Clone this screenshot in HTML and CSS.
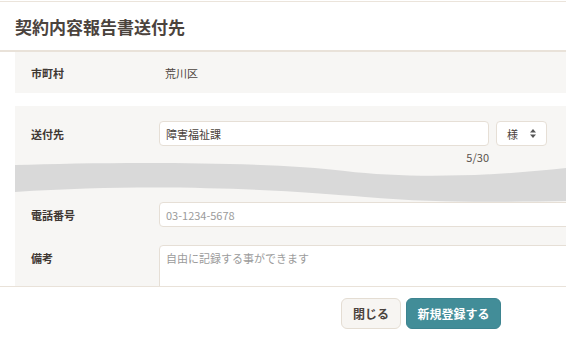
FILE: index.html
```html
<!DOCTYPE html>
<html lang="ja">
<head>
  <meta charset="UTF-8">
  <meta name="viewport" content="width=device-width, initial-scale=1.0">
  <title>契約内容報告書送付先</title>
  <link rel="stylesheet" href="styles.css">
</head>
<body>
  <div class="modal">
    <div class="modal-header">
      <h1>契約内容報告書送付先</h1>
    </div>

    <div class="modal-body">
      <div class="panel panel-city">
        <div class="row">
          <div class="label">市町村</div>
          <div class="value">荒川区</div>
        </div>
      </div>

      <div class="panel panel-form">
        <div class="row row-input">
          <div class="label">送付先</div>
          <div class="field">
            <input class="text-input dest" type="text" value="障害福祉課">
            <div class="select">
              <span>様</span>
              <svg class="select-arrow" viewBox="0 0 6 9" fill="currentColor">
                <path d="M3 0 L6 3.4 L0 3.4 Z"/>
                <path d="M3 9 L6 5.6 L0 5.6 Z"/>
              </svg>
            </div>
          </div>
        </div>
        <div class="counter">5/30</div>

        <!-- 省略部分 -->
        <svg class="wave" viewBox="0 0 551 40" preserveAspectRatio="none">
          <path d="M0 3 C90 0 250 -1 330 9 C395 17 480 14 551 6 L551 39 C480 40 420 41 350 35 C280 29 150 20 0 30 Z" fill="#d9d9d9"/>
        </svg>

        <div class="row row-input">
          <div class="label">電話番号</div>
          <input class="text-input wide" type="text" placeholder="03-1234-5678">
        </div>
        <div class="row row-note">
          <div class="label">備考</div>
          <textarea class="text-input wide note" placeholder="自由に記録する事ができます"></textarea>
        </div>
      </div>
    </div>

    <div class="modal-footer">
      <button class="btn btn-close">閉じる</button>
      <button class="btn btn-primary">新規登録する</button>
    </div>
  </div>
</body>
</html>
```

FILE: styles.css
```css
body {
  margin: 0;
  font-family: "Noto Sans CJK JP", "Noto Sans", sans-serif;
  color: #4a423c;
  background-color: #fff;
  overflow: hidden;
}
.modal {
  margin-top: 1px;
  border-top: 1px solid #ebe4db;
  height: 340px;
  display: flex;
  flex-direction: column;
}
.modal-header {
  height: 48px;
  display: flex;
  align-items: center;
  padding-left: 15px;
  border-bottom: 2px solid #e9e2d9;
  flex-shrink: 0;
}
h1 {
  margin: 0;
  font-size: 17px;
  font-weight: 700;
  color: #4b433d;
}
.modal-body {
  height: 234px;
  padding-left: 15px;
  overflow: hidden;
  flex-shrink: 0;
}
.panel {
  background-color: #f7f6f4;
}
.panel-city {
  height: 41px;
  display: flex;
  align-items: center;
  margin-bottom: 13px;
}
.row {
  display: flex;
  align-items: center;
  padding-left: 16px;
}
.label {
  width: 128px;
  flex-shrink: 0;
  font-size: 11px;
  font-weight: 700;
  color: #3f3833;
}
.value {
  padding-left: 6px;
  font-size: 11px;
  color: #4d4540;
}
.panel-form {
  padding-top: 15px;
}
.field {
  display: flex;
  gap: 7px;
}
.text-input {
  box-sizing: border-box;
  height: 25px;
  padding: 0 6px;
  border: 1px solid #e6dfd6;
  border-radius: 4px;
  background-color: #fff;
  font-family: inherit;
  font-size: 11px;
  color: #4a423c;
  outline: none;
}
.text-input::placeholder {
  color: #9b9b9b;
}
.dest {
  width: 330px;
}
.wide {
  width: 480px;
  flex-shrink: 0;
}
.select {
  box-sizing: border-box;
  width: 51px;
  height: 25px;
  display: flex;
  align-items: center;
  justify-content: space-between;
  padding: 0 10px;
  border: 1px solid #e6dfd6;
  border-radius: 4px;
  background-color: #fff;
  font-size: 11px;
  color: #4a423c;
}
.select-arrow {
  width: 6px;
  height: 9px;
  color: #555;
}
.counter {
  width: 474px;
  text-align: right;
  font-size: 11px;
  line-height: 14px;
  color: #5a524c;
  margin-top: 4px;
}
.wave {
  display: block;
  width: 100%;
  height: 40px;
  margin-top: -2px;
}
.row-note {
  align-items: flex-start;
  margin-top: 18px;
}
.row-note .label {
  padding-top: 5px;
}
.note {
  height: 60px;
  padding-top: 4px;
  resize: none;
}
.modal-footer {
  flex: 1;
  border-top: 1px solid #e9e2d9;
  display: flex;
  justify-content: flex-end;
  align-items: flex-start;
  gap: 5px;
  padding: 11px 65px 0 0;
}
.btn {
  height: 31px;
  padding: 0;
  border-radius: 6px;
  font-family: inherit;
  font-size: 12px;
  font-weight: 700;
  white-space: nowrap;
  cursor: pointer;
}
.btn-close {
  width: 60px;
  background-color: #f7f5f2;
  border: 1px solid #e4ddd3;
  color: #4a423c;
}
.btn-primary {
  width: 95px;
  background-color: #428d98;
  border: 1px solid #3d8490;
  color: #fff;
}
```
